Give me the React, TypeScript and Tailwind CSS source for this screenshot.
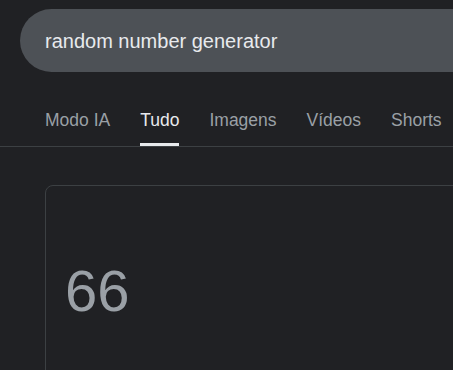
import React from "react";

export default function App() {
  const tabs = ["Modo IA", "Tudo", "Imagens", "Vídeos", "Shorts"];
  return (
    <div
      className="w-full h-[370px] overflow-hidden bg-[#202124]"
      style={{ fontFamily: '"Liberation Sans", Arial, sans-serif' }}
    >
      <div className="pt-[9px] pl-[20px]">
        <div className="h-[63px] w-[520px] rounded-l-full bg-[#4d5156] flex items-center pl-[25px]">
          <span className="text-[20px] text-[#e8eaed]">random number generator</span>
        </div>
      </div>
      <div className="pt-[38px] pl-[45px] flex gap-[30px] border-b border-[#3c4043] whitespace-nowrap">
        {tabs.map((t) => {
          const active = t === "Tudo";
          return (
            <div key={t} className="flex flex-col">
              <span
                className={`text-[17.5px] leading-[20px] ${
                  active ? "text-[#e8eaed]" : "text-[#9aa0a6]"
                }`}
              >
                {t}
              </span>
              <div className="h-[13px]" />
              <div className={`h-[3px] ${active ? "bg-[#e8eaed]" : "bg-transparent"}`} />
            </div>
          );
        })}
      </div>
      <div className="mt-[38px] ml-[45px] w-[500px] h-[300px] border border-[#3c4043] rounded-[8px] pt-[76px] pl-[19px]">
        <div className="text-[58px] leading-[58px] text-[#9aa0a6]">66</div>
      </div>
    </div>
  );
}
